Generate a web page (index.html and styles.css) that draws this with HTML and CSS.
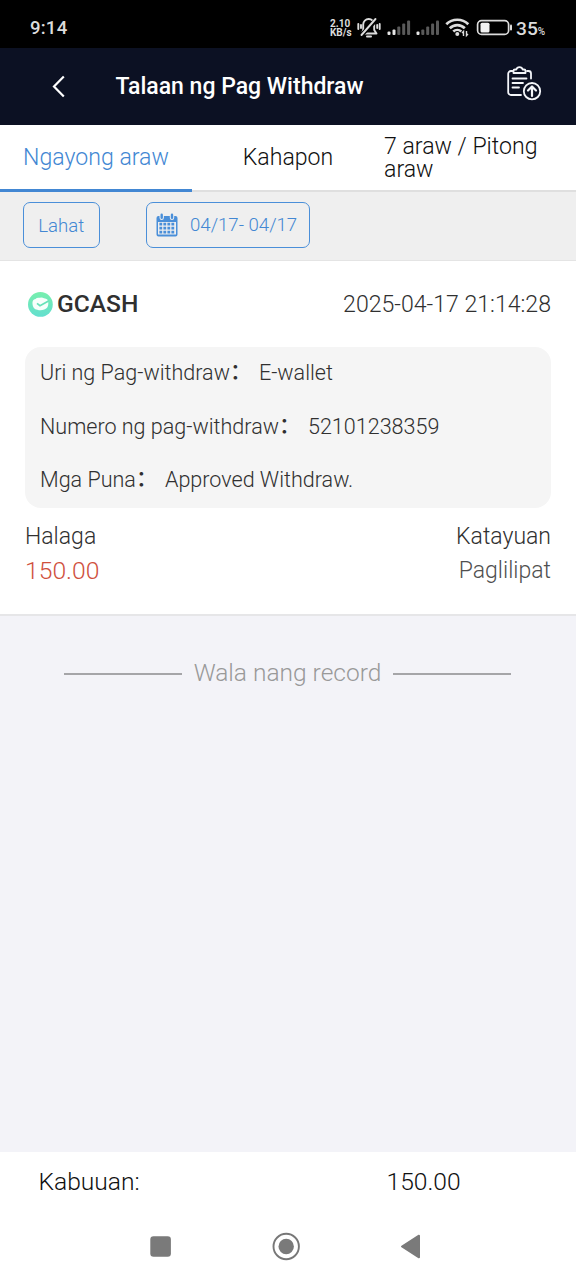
FILE: index.html
```html
<!DOCTYPE html>
<html lang="fil">
<head>
<meta charset="utf-8">
<title>Talaan ng Pag Withdraw</title>
<link rel="stylesheet" href="styles.css">
</head>
<body>
<div class="screen">
  <div class="status">
    <span class="clock">9:14</span>
    <span class="speed"><span>2.10</span><span>KB/s</span></span>
    <svg class="status-icons" width="183" height="24" viewBox="357 16 183 24" fill="none" stroke="#dcdcdc">
      <g stroke-width="1.9" stroke-linecap="round" stroke-linejoin="round">
        <path d="M362 33.500h14.500l-2.300-3.500v-5.500a5.500 5.500 0 0 0-11 0v5.500z"/>
        <path d="M376.500 19.500L361 35.500" stroke="#000" stroke-width="4.500"/>
        <path d="M375.500 19L361.500 35M358.300 24v5M379.700 24v5M361 25v3M377.200 25v3"/>
        <path d="M367 36.400h4" stroke-width="2"/>
      </g>
      <g stroke="none" fill="#e6e6e6">
        <rect x="387.500" y="31.500" width="3" height="3.500" rx="1"/><rect x="392.500" y="29.500" width="3" height="5.500" rx="1"/>
        <rect x="416.500" y="31.500" width="3" height="3.500" rx="1"/>
      </g>
      <g stroke="none" fill="#5a5a5a">
        <rect x="397.300" y="26.500" width="3" height="8.500" rx="1"/><rect x="402.200" y="23.500" width="3" height="11.500" rx="1"/><rect x="407.100" y="20.500" width="3" height="14.500" rx="1"/>
        <rect x="421.300" y="29.500" width="3" height="5.500" rx="1"/><rect x="426.200" y="26.500" width="3" height="8.500" rx="1"/><rect x="431.100" y="23.500" width="3" height="11.500" rx="1"/><rect x="436" y="20.500" width="3" height="14.500" rx="1"/>
      </g>
      <path d="M446.300 24.300a15.600 15.600 0 0 1 22 0M449.800 28.200a10.600 10.600 0 0 1 15 0M453.300 31.600a5.800 5.800 0 0 1 8 0" stroke-width="2.700"/>
      <circle cx="457.300" cy="34" r="2" fill="#dcdcdc" stroke="none"/>
      <path d="M463.500 36v-4.500l-1.500 1.500M466.500 31v4.500l1.500-1.500" stroke-width="1.400"/>
      <rect x="477.600" y="20.600" width="31" height="13.800" rx="4" stroke-width="1.700"/>
      <rect x="480.500" y="22.800" width="9" height="9.600" rx="1.500" fill="#f2f2f2" stroke="none"/>
      <path d="M511 25.500v4" stroke-width="2" stroke-linecap="round"/>
    </svg>
    <span class="battery">35<small>%</small></span>
  </div>

  <header class="header">
    <svg class="back" width="14" height="24" viewBox="0 0 14 24" fill="none" stroke="#fff" stroke-width="2.200"><path d="M12.800 2.500L3 12.500l9.800 10"/></svg>
    <h1 class="title">Talaan ng Pag Withdraw</h1>
    <svg class="clip" width="36" height="36" viewBox="506 66 36 36" fill="none" stroke="#f4f6fa" stroke-width="1.800" stroke-linecap="round" stroke-linejoin="round">
      <path d="M512.500 71h-1.500a2.800 2.800 0 0 0-2.800 2.800v18.400a2.800 2.800 0 0 0 2.800 2.800h10M527 71h1.500a2.500 2.500 0 0 1 2.500 2.500v5"/>
      <path d="M513.500 73v-2.300q0-1.200 1.500-1.200h1.300q.700-2.300 3.200-2.300t3.200 2.300h1.300q1.500 0 1.500 1.200v2.300z"/>
      <path d="M512.500 78.500h14M512.500 83h10.500M512.500 87.500h6.500"/>
      <circle cx="532" cy="91.200" r="8.200"/>
      <path d="M532 96v-9M528 90.500l4-4 4 4" stroke-width="2.200"/>
    </svg>
  </header>

  <nav class="tabs">
    <div class="tab tab-active">Ngayong araw</div>
    <div class="tab">Kahapon</div>
    <div class="tab tab-week">7 araw / Pitong araw</div>
  </nav>

  <div class="filters">
    <div class="pill pill-all">Lahat</div>
    <div class="pill pill-date">
      <svg width="22" height="24" viewBox="0 0 22 24">
        <path d="M2.500 3h17a2 2 0 0 1 2 2v16.500a2 2 0 0 1-2 2h-17a2 2 0 0 1-2-2V5a2 2 0 0 1 2-2z" fill="#4a8fd9"/>
        <path d="M2 9h18v12.500H2z" fill="#efefef"/>
        <g fill="none" stroke="#4a8fd9" stroke-width="2.700" stroke-dasharray="2.800 1.200"><path d="M3.400 11.200h15.600M3.400 15.200h15.600M3.400 19.200h15.600"/></g>
        <g stroke="#efefef" stroke-width="4.400" stroke-linecap="round"><path d="M5.700 2.500v2.300M16 2.500v2.300"/></g>
        <g stroke="#4a8fd9" stroke-width="2.400" stroke-linecap="round"><path d="M5.700 1.700v3M16 1.700v3"/></g>
      </svg>
      <span>04/17- 04/17</span>
    </div>
  </div>

  <section class="card">
    <div class="card-head">
      <svg class="coin" width="26" height="26" viewBox="0 0 26 26">
        <defs><linearGradient id="mint" x1="0" y1="0" x2="0" y2="1"><stop offset="0" stop-color="#77efad"/><stop offset="1" stop-color="#63dfcf"/></linearGradient></defs>
        <circle cx="13.400" cy="13.400" r="12.400" fill="url(#mint)"/>
        <path d="M5.500 13q-.5-4.500 3-5 1.500-1.800 4-1.200 2.500-1 4.500.4 4.500.3 4.300 4.800.3 5-4 6.500-3.500 1.500-7 .3-4.500-.8-4.800-5.800z" fill="#f7fffc"/>
        <path d="M10 12.300l3 2.400 8.500-4.700" fill="none" stroke="#67e2b9" stroke-width="1.700"/>
      </svg>
      <span class="brand">GCASH</span>
      <time class="stamp">2025-04-17 21:14:28</time>
    </div>
    <div class="details">
      <div class="row"><span>Uri ng Pag-withdraw</span><span class="colon">：</span><span>E-wallet</span></div>
      <div class="row"><span>Numero ng pag-withdraw</span><span class="colon">：</span><span>52101238359</span></div>
      <div class="row"><span>Mga Puna</span><span class="colon">：</span><span>Approved Withdraw.</span></div>
    </div>
    <div class="summary"><span>Halaga</span><span>Katayuan</span></div>
    <div class="summary values"><span class="amount">150.00</span><span class="state">Paglilipat</span></div>
  </section>

  <main class="rest">
    <div class="end"><span class="rule"></span><span class="end-text">Wala nang record</span><span class="rule"></span></div>
  </main>

  <footer class="total"><span class="total-label">Kabuuan:</span><span class="total-value">150.00</span></footer>
  <div class="navbar">
    <svg width="576" height="60" viewBox="0 0 576 60" fill="#7a7a7a">
      <rect x="150.300" y="16.300" width="20.600" height="20.400" rx="3.200"/>
      <circle cx="286.200" cy="26.500" r="12.700" fill="none" stroke="#777" stroke-width="1.900"/>
      <circle cx="286.200" cy="26.500" r="7.700"/>
      <path d="M419 15.700v21.600L402 26.500z" stroke="#7a7a7a" stroke-width="2" stroke-linejoin="round"/>
    </svg>
  </div>
</div>
</body>
</html>
```
FILE: styles.css
```css
* { box-sizing: border-box; }
body { margin: 0; font-family: Roboto, "Noto Sans CJK SC", "Liberation Sans", sans-serif; font-weight: 300; color: #303030; background: #fff; }
svg { display: block; flex: none; }
.screen { width: 576px; height: 1280px; display: flex; flex-direction: column; overflow: hidden; white-space: nowrap; }
.status { height: 48px; flex: none; background: #000; color: #dcdcdc; display: flex; padding: 0 0 0 30px; }
.clock { width: 300px; padding-top: 16px; font-size: 18.600px; line-height: 25px; font-weight: 500; letter-spacing: .2px; }
.speed { width: 27px; padding-top: 19px; display: flex; flex-direction: column; font-size: 10px; line-height: 9px; font-weight: 700; }
.status-icons { margin: 16px -24px 0 0; }
.battery { padding-top: 16px; font-size: 19.200px; line-height: 25px; font-weight: 500; }
.battery small { font-size: 10px; }
.header { height: 77px; flex: none; background: #0c1123; color: #fff; display: flex; padding-left: 51px; }
.back { margin-top: 26px; }
.title { width: 441px; margin: 0; padding: 24px 0 0 50.500px; font-size: 23px; line-height: 30px; font-weight: 500; }
.clip { margin-top: 18px; }
.tabs { height: 67px; flex: none; display: grid; grid-template-columns: repeat(3, 192px); border-bottom: 2px solid #dfdfdf; font-size: 23.100px; line-height: 23px; color: #101010; background: #fff; }
.tab { height: 67px; padding-top: 21px; text-align: center; }
.tab-active { color: #4287d3; border-bottom: 3px solid #4287d3; }
.tab-week { padding-top: 10px; text-align: left; white-space: normal; }
.filters { height: 69px; flex: none; background: #efefef; border-bottom: 1px solid #e4e4e4; display: flex; gap: 46.500px; padding: 10px 23px; }
.pill { height: 46px; border: 1.500px solid #4a8fd9; border-radius: 7px; color: #4287d3; font-size: 18.600px; line-height: 43px; }
.pill-all { width: 76.500px; text-align: center; padding-top: 2px; }
.pill-date { width: 163.500px; display: flex; padding-left: 9px; gap: 12px; }
.pill-date span { padding-top: 1px; }
.pill-date svg { margin-top: 10px; }
.card { height: 355px; flex: none; background: #fff; border-bottom: 2px solid #e6e6e8; padding: 26px 25px 0; }
.card-head { height: 60px; display: flex; line-height: 34px; padding-left: 2px; }
.coin { margin-top: 4px; }
.brand { margin-left: 4px; font-size: 24.600px; font-weight: 500; }
.stamp { margin-left: auto; padding-top: 1px; font-size: 23.100px; }
.details { height: 161px; border-radius: 16px; background: #f5f5f5; padding-left: 15px; font-size: 21.550px; }
.row { height: 53.600px; line-height: 52px; display: flex; }
.colon { width: 29px; line-height: 50px; font-weight: 500; }
.summary { display: flex; justify-content: space-between; padding-top: 14px; font-size: 23px; line-height: 30px; }
.values { padding-top: 4px; }
.amount { font-size: 24.700px; color: #cf503d; }
.state { color: #505050; }
.rest { flex: 1; background: #f3f3f8; }
.end { display: flex; align-items: center; justify-content: center; gap: 12px; padding: 40px 1px 0 0; color: #999; font-size: 24.500px; line-height: 34px; }
.rule { width: 118px; height: 2px; background: #a5a5a8; margin-top: 2px; }
.total { height: 68px; flex: none; background: #fff; color: #101010; display: flex; padding: 14px 0 0 38.500px; font-size: 24.600px; line-height: 32px; }
.total-label { width: 348px; }
.navbar { height: 60px; flex: none; background: #fff; }
```
